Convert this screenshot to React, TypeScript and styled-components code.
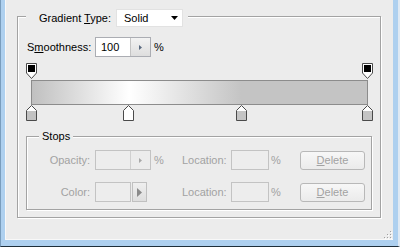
import React from 'react';
import styled, { createGlobalStyle } from 'styled-components';

const Global = createGlobalStyle`
  html, body { margin: 0; padding: 0; background: #2b3a44; }
  body { font-family: "Liberation Sans", Arial, sans-serif; font-size: 11px; color: #000; }
  #root { width: 400px; height: 247px; }
`;

const Frame = styled.div`
  width: 400px;
  height: 247px;
  box-sizing: border-box;
  display: flex;
  flex-direction: column;
  background: #aed0ef;
  border-left: 1px solid #7a9dbd;
  border-right: 2px solid #dfe9f3;
  border-bottom: 1px solid #1f2f3a;
  padding: 0 5px 6px 4px;
`;

const Content = styled.div`
  flex: 1;
  position: relative;
  display: flex;
  flex-direction: column;
  background: #ececec;
  box-shadow: inset 1px -1px 0 #f8f8f8;
`;

const GroupBox = styled.div`
  border: 1px solid #a3a3a3;
  box-shadow: inset 1px 1px 0 #fff, 1px 1px 0 #fff;
  display: flex;
  flex-direction: column;
  align-items: flex-start;
`;

const OuterBox = styled(GroupBox)`
  margin: 16px 12px 0 12px;
  padding: 0 8px 7px 8px;
`;

const StopsBox = styled(GroupBox)`
  align-self: stretch;
  margin-top: 15px;
  padding: 0 0 7px 0;
`;

const Legend = styled.div`
  display: flex;
  align-items: center;
  background: #ececec;
`;

const OuterLegend = styled(Legend)`
  height: 18px;
  margin-top: -8px;
  padding: 0 5px 0 13px;
  gap: 5px;
`;

const StopsLegend = styled(Legend)`
  height: 14px;
  margin: -8px 0 0 12px;
  padding: 0 3px;
`;

const Select = styled.div`
  width: 67px;
  height: 18px;
  box-sizing: border-box;
  background: #fff;
  border: 1px solid #e2e2e2;
  display: flex;
  align-items: center;
  justify-content: space-between;
  padding: 0 4px 0 7px;
`;

const Row = styled.div`
  display: flex;
  align-items: center;
`;

const SmoothRow = styled(Row)`
  margin-top: 10px;
  padding-left: 1px;
`;

const Label = styled.span<{ $w?: number; $right?: boolean; $disabled?: boolean }>`
  display: inline-block;
  width: ${(p) => (p.$w ? `${p.$w}px` : 'auto')};
  text-align: ${(p) => (p.$right ? 'right' : 'left')};
  padding-right: ${(p) => (p.$right ? '5px' : '0')};
  box-sizing: border-box;
  color: ${(p) => (p.$disabled ? '#a2a2a2' : '#000')};
  white-space: nowrap;
`;

const Spinner = styled.div<{ $disabled?: boolean }>`
  width: 56px;
  height: 20px;
  box-sizing: border-box;
  display: flex;
  border: 1px solid ${(p) => (p.$disabled ? '#c3c3c3' : '#abadb3')};
  background: ${(p) => (p.$disabled ? '#ededed' : '#fff')};
`;

const SpinText = styled.div`
  flex: 1;
  display: flex;
  align-items: center;
  padding-left: 5px;
`;

const SpinBtn = styled.div<{ $disabled?: boolean }>`
  width: 19px;
  display: flex;
  align-items: center;
  justify-content: center;
  border-left: 1px solid ${(p) => (p.$disabled ? '#d0d0d0' : '#c4c4c4')};
  background: ${(p) => (p.$disabled ? '#ececec' : 'linear-gradient(#f3f3f3, #dedede)')};
`;

const Percent = styled.span<{ $disabled?: boolean; $ml?: number }>`
  margin-left: ${(p) => p.$ml ?? 0}px;
  color: ${(p) => (p.$disabled ? '#a2a2a2' : '#000')};
`;

const GradientArea = styled.div`
  position: relative;
  width: 347px;
  height: 58px;
  box-sizing: border-box;
  margin-top: 6px;
  padding: 17px 5px 0 5px;
`;

const Bar = styled.div`
  height: 25px;
  box-sizing: border-box;
  border: 1px solid #8c8c8c;
  background: linear-gradient(to right, #c0c0c0 0%, #ffffff 29%, #c4c4c4 62.5%, #c4c4c4 100%);
`;

const Marker = styled.div<{ $bottom?: boolean }>`
  position: absolute;
  top: ${(p) => (p.$bottom ? '42px' : '0')};
  width: 11px;
  height: 16px;
  display: flex;
`;

const StopsGrid = styled.div`
  display: grid;
  grid-template-columns: 68px 59px 28px 49px 40px 29px 65px;
  row-gap: 12px;
  align-items: center;
  margin-top: 7px;
`;

const Field = styled.div<{ $w: number }>`
  width: ${(p) => p.$w}px;
  height: 20px;
  box-sizing: border-box;
  border: 1px solid #c3c3c3;
  background: #ededed;
`;

const ColorPick = styled.div`
  display: flex;
  gap: 1px;
  height: 20px;
`;

const ArrowBtn = styled.div`
  width: 15px;
  box-sizing: border-box;
  border: 1px solid #c0c0c0;
  background: linear-gradient(#efefef, #dedede);
  display: flex;
  align-items: center;
  justify-content: center;
`;

const Button = styled.div`
  width: 65px;
  height: 19px;
  box-sizing: border-box;
  border: 1px solid #b8b8b8;
  border-radius: 3px;
  background: linear-gradient(#f7f7f7, #ebebeb);
  color: #a2a2a2;
  display: flex;
  align-items: center;
  justify-content: center;
`;

const Grip = styled.svg`
  position: absolute;
  right: 1px;
  bottom: 1px;
`;

const TopMarker = () => (
  <svg width="11" height="16" viewBox="0 0 11 16">
    <path d="M0.5 0.5H10.5V10L5.5 15.5L0.5 10Z" fill="#fff" stroke="#4a4a4a" />
    <rect x="2" y="2" width="7" height="7" fill="#000" />
  </svg>
);

const BottomMarker = ({ color }: { color: string }) => (
  <svg width="11" height="16" viewBox="0 0 11 16">
    <path d="M5.5 0.5L10.5 5.5V15.5H0.5V5.5Z" fill="#fff" stroke="#4a4a4a" />
    <rect x="1" y="6" width="9" height="9" fill={color} />
  </svg>
);

const opacityStops = [0, 1];
const colorStops = [
  { pos: 0, color: '#c2c2c2' },
  { pos: 0.289, color: '#ffffff' },
  { pos: 0.625, color: '#c4c4c4' },
  { pos: 1, color: '#c4c4c4' },
];
const BAR_SPAN = 336;

const SmallArrow = ({ color = '#5a6a80' }: { color?: string }) => (
  <svg width="3" height="5" viewBox="0 0 3 5">
    <path d="M0 0L3 2.5L0 5Z" fill={color} />
  </svg>
);

export default function App() {
  return (
    <>
      <Global />
      <Frame>
        <Content>
          <OuterBox>
            <OuterLegend>
              <Label>
                Gradient <u>T</u>ype:
              </Label>
              <Select>
                <span>Solid</span>
                <svg width="7" height="4" viewBox="0 0 7 4">
                  <path d="M0 0H7L3.5 4Z" fill="#000" />
                </svg>
              </Select>
            </OuterLegend>

            <SmoothRow>
              <Label $w={68}>
                S<u>m</u>oothness:
              </Label>
              <Spinner>
                <SpinText>100</SpinText>
                <SpinBtn>
                  <SmallArrow />
                </SpinBtn>
              </Spinner>
              <Percent $ml={3}>%</Percent>
            </SmoothRow>

            <GradientArea>
              {opacityStops.map((p) => (
                <Marker key={`o${p}`} style={{ left: p * BAR_SPAN }}>
                  <TopMarker />
                </Marker>
              ))}
              <Bar />
              {colorStops.map((s) => (
                <Marker key={`c${s.pos}`} $bottom style={{ left: Math.round(s.pos * BAR_SPAN) }}>
                  <BottomMarker color={s.color} />
                </Marker>
              ))}
            </GradientArea>

            <StopsBox>
              <StopsLegend>Stops</StopsLegend>
              <StopsGrid>
                <Label $right $disabled>Opacity:</Label>
                <Spinner $disabled>
                  <SpinText />
                  <SpinBtn $disabled>
                    <SmallArrow color="#a8a8a8" />
                  </SpinBtn>
                </Spinner>
                <Percent $disabled>%</Percent>
                <Label $disabled>Location:</Label>
                <Field $w={38} />
                <Percent $disabled>%</Percent>
                <Button>
                  <span>
                    <u>D</u>elete
                  </span>
                </Button>

                <Label $right $disabled>Color:</Label>
                <ColorPick>
                  <Field $w={36} />
                  <ArrowBtn>
                    <svg width="5" height="9" viewBox="0 0 5 9">
                      <path d="M0 0L5 4.5L0 9Z" fill="#8a8a8a" />
                    </svg>
                  </ArrowBtn>
                </ColorPick>
                <span />
                <Label $disabled>Location:</Label>
                <Field $w={38} />
                <Percent $disabled>%</Percent>
                <Button>
                  <span>
                    <u>D</u>elete
                  </span>
                </Button>
              </StopsGrid>
            </StopsBox>
          </OuterBox>
          <Grip width="8" height="8" viewBox="0 0 8 8">
            {[
              [6, 0],
              [6, 3],
              [3, 3],
              [6, 6],
              [3, 6],
              [0, 6],
            ].map(([x, y]) => (
              <g key={`${x}-${y}`}>
                <rect x={x + 1} y={y + 1} width="1" height="1" fill="#fff" />
                <rect x={x} y={y} width="1" height="1" fill="#a0a0a0" />
              </g>
            ))}
          </Grip>
        </Content>
      </Frame>
    </>
  );
}
